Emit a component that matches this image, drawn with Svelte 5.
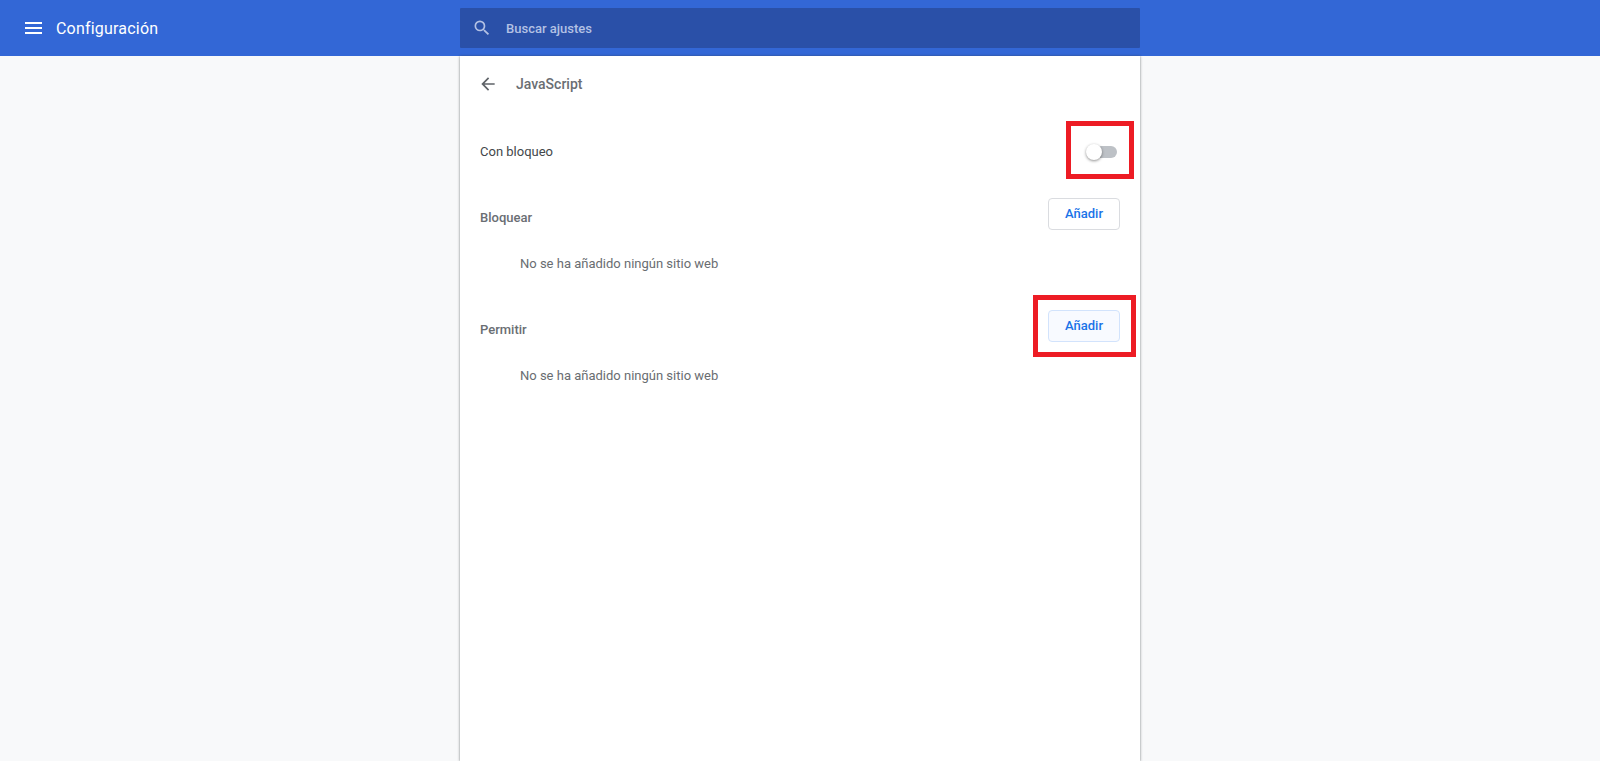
<script>
  const sections = [
    { title: 'Bloquear', hover: false, empty: 'No se ha añadido ningún sitio web' },
    { title: 'Permitir', hover: true, empty: 'No se ha añadido ningún sitio web' }
  ];
</script>

<div class="page">
  <header class="top">
    <div class="brand">
      <svg class="menu" width="17" height="12" viewBox="0 0 17 12" fill="#fff"><path d="M0 0h17v2H0zM0 5h17v2H0zM0 10h17v2H0z"/></svg>
      <span class="brand-title">Configuración</span>
    </div>
    <div class="search">
      <svg width="20" height="20" viewBox="0 0 24 24" fill="#b3c1e4"><path d="M15.5 14h-.79l-.28-.27A6.47 6.47 0 0 0 16 9.5 6.5 6.5 0 1 0 9.5 16c1.61 0 3.09-.59 4.23-1.57l.27.28v.79l5 4.99L20.49 19l-4.99-5zm-6 0C7.01 14 5 11.99 5 9.5S7.01 5 9.5 5 14 7.01 14 9.5 11.99 14 9.5 14z"/></svg>
      <span class="search-text">Buscar ajustes</span>
    </div>
  </header>

  <main class="card">
    <div class="subpage">
      <svg class="back" width="20" height="20" viewBox="0 0 24 24" fill="#5f6368"><path d="M20 11H7.83l5.59-5.59L12 4l-8 8 8 8 1.41-1.41L7.83 13H20v-2z"/></svg>
      <span class="subpage-title">JavaScript</span>
    </div>

    <div class="toggle-row">
      <span class="toggle-label">Con bloqueo</span>
      <div class="toggle"><span class="bar"></span><span class="knob"></span></div>
      <span class="mark mark-toggle"></span>
    </div>

    {#each sections as s}
      <section class="list">
        <div class="list-head">
          <span class="list-title">{s.title}</span>
          <button class="add" class:hover={s.hover}>Añadir</button>
          {#if s.hover}<span class="mark mark-add"></span>{/if}
        </div>
        <div class="empty">{s.empty}</div>
      </section>
    {/each}
  </main>
</div>

<style>
  :global(body) {
    margin: 0;
    background: #f8f9fa;
    font-family: Roboto, "Liberation Sans", sans-serif;
  }
  .page {
    height: 761px;
    overflow: hidden;
    display: flex;
    flex-direction: column;
  }
  .top {
    height: 56px;
    flex: none;
    background: #3367d6;
    display: flex;
    align-items: center;
  }
  .brand {
    width: 460px;
    flex: none;
    display: flex;
    align-items: center;
    padding-left: 25px;
    box-sizing: border-box;
    height: 56px;
  }
  .menu { margin-right: 14px; }
  .brand-title {
    color: #fff;
    font-size: 16px;
    font-weight: 400;
    letter-spacing: 0.2px;
  }
  .search {
    width: 680px;
    height: 40px;
    background: #2a50a8;
    border-radius: 1px;
    display: flex;
    align-items: center;
    padding-left: 12px;
    box-sizing: border-box;
  }
  .search-text {
    margin-left: 14px;
    color: #b3c1e4;
    font-size: 13px;
    font-weight: 500;
  }
  .card {
    width: 680px;
    flex: 1;
    margin-left: 460px;
    background: #fff;
    box-shadow: 0 0 2px rgba(60, 64, 67, 0.5), 0 1px 3px rgba(60, 64, 67, 0.25);
    padding: 0 20px;
    box-sizing: border-box;
  }
  .subpage {
    height: 56px;
    display: flex;
    align-items: center;
    color: #6a6e73;
  }
  .back { margin-left: -2px; }
  .subpage-title {
    margin-left: 18px;
    font-size: 14px;
    font-weight: 500;
  }
  .toggle-row {
    height: 46px;
    margin: 16px 0 8px;
    display: flex;
    align-items: center;
    justify-content: space-between;
    position: relative;
  }
  .toggle-label {
    color: #43474a;
    font-size: 13px;
  }
  .toggle {
    position: relative;
    width: 32px;
    height: 24px;
    margin: 2px 3px 0 0;
    flex: none;
  }
  .bar {
    position: absolute;
    left: 2px;
    top: 6px;
    width: 30px;
    height: 12px;
    border-radius: 6px;
    background: #bdc1c6;
  }
  .knob {
    position: absolute;
    left: 1px;
    top: 4px;
    width: 16px;
    height: 16px;
    border-radius: 50%;
    background: #fff;
    box-shadow: 0 1px 3px rgba(0, 0, 0, 0.45);
  }
  .list-head {
    display: flex;
    align-items: center;
    justify-content: space-between;
    height: 64px;
    position: relative;
  }
  .list-title {
    color: #6a6e73;
    font-size: 13px;
    font-weight: 500;
    padding-top: 6px;
  }
  .add {
    width: 72px;
    height: 32px;
    background: #fff;
    border: 1px solid #dadce0;
    border-radius: 4px;
    color: #1a73e8;
    font-family: inherit;
    font-size: 13px;
    font-weight: 500;
    padding: 0 0 2px;
    box-sizing: border-box;
  }
  .add.hover {
    background: #f8faff;
    border-color: #d2e3fc;
  }
  .empty {
    height: 48px;
    padding: 10px 0 0 40px;
    box-sizing: border-box;
    color: #696d71;
    font-size: 13px;
  }
  .mark {
    position: absolute;
    border: 5px solid #ed1c24;
    box-sizing: border-box;
  }
  .mark-toggle {
    right: -14px;
    top: -7px;
    width: 68px;
    height: 58px;
  }
  .mark-add {
    right: -16px;
    top: 1px;
    width: 103px;
    height: 62px;
  }
</style>
